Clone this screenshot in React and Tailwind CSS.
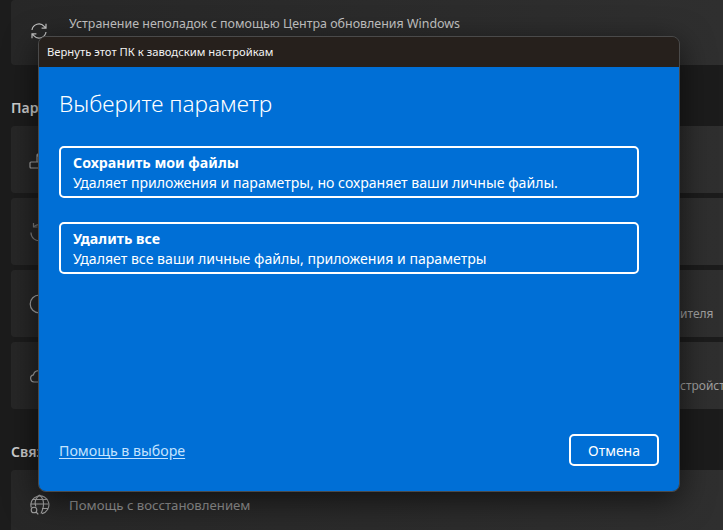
const font = "font-['Noto_Sans','Open_Sans',sans-serif]";

function Card({ className = "", icon, children }) {
  return (
    <div className={`ml-[11px] flex shrink-0 rounded-l-[4px] bg-gradient-to-r from-[#272727] to-[#2f2f2f] ${className}`}>
      <div className="flex w-[58px] shrink-0 items-center justify-center pr-[3px] text-[#a6a6a6]">{icon}</div>
      <div className="min-w-0 flex-1 overflow-hidden whitespace-nowrap">{children}</div>
    </div>
  );
}

const RefreshIcon = (
  <svg width="18" height="18" viewBox="0 0 18 18" fill="none" stroke="#c4c4c4" strokeWidth="1.2">
    <path d="M2 8a7 7 0 0 1 12.2-3.6L16 6.2M16 1.800v4.400h-4.400" />
    <path d="M16 10a7 7 0 0 1-12.200 3.600L2 11.800M2 16.200v-4.400h4.400" />
  </svg>
);

const ResetIcon = (
  <svg width="20" height="20" viewBox="0 0 20 20" fill="none" stroke="currentColor" strokeWidth="1.2">
    <path d="M1 17v-4a1 1 0 0 1 1-1h16a1 1 0 0 1 1 1v4a1 1 0 0 1-1 1H2a1 1 0 0 1-1-1Z" />
    <path d="M8 12V5h9M11 2 8 5l3 3" />
  </svg>
);

const HistoryIcon = (
  <svg width="20" height="20" viewBox="0 0 20 20" fill="none" stroke="#7e7e7e" strokeWidth="1.2">
    <path d="M5 4.500a8 8 0 1 1-3 6" />
    <path d="M4.500 1v4h4" />
  </svg>
);

const ClockIcon = (
  <svg width="20" height="20" viewBox="0 0 20 20" fill="none" stroke="currentColor" strokeWidth="1.2">
    <circle cx="10" cy="10" r="8.800" />
    <path d="M10 4.500v6h3.500" />
  </svg>
);

const CloudIcon = (
  <svg width="20" height="18" viewBox="0 0 20 18" fill="none" stroke="currentColor" strokeWidth="1.2">
    <path d="M5 15a3.600 3.600 0 0 1-.6-7.100A5.500 5.500 0 0 1 15 7.400 3.900 3.900 0 0 1 15 15Z" />
  </svg>
);

const GlobeIcon = (
  <svg width="21" height="21" viewBox="0 0 21 21" fill="none" stroke="currentColor" strokeWidth="1.1">
    <path d="M2.300 13.500A9 9 0 1 1 13 19.600" />
    <path d="M1.600 10h17.800M3 5.500h15M10.500 1c-5 4-5 8-3.600 11.500M10.500 1c4.800 4 5 11 1.500 18.500M13 14.500h6" />
    <circle cx="5" cy="16" r="2.800" />
    <path d="M7 18l2.300 2.300" />
  </svg>
);

function OptionButton({ title, description }) {
  return (
    <button className="flex h-[52px] w-full flex-col items-start justify-center rounded-[5px] border-2 border-white pl-[12px] text-left leading-[19px] text-white">
      <span className="text-[14.2px] font-bold">{title}</span>
      <span className="mt-[1px] text-[14.1px]">{description}</span>
    </button>
  );
}

export default function App() {
  return (
    <div className={`relative h-[530px] w-[723px] overflow-hidden bg-[#1c1c1c] ${font}`}>
      {/* Settings page behind the dialog */}
      <div className="flex h-full flex-col">
        <Card className="h-[65px]" icon={<div className="pb-[3px]">{RefreshIcon}</div>}>
          <div className="pt-[14px] text-[12.45px] leading-[20px] text-[#c6c6c6]">
            Устранение неполадок с помощью Центра обновления Windows
          </div>
        </Card>

        <div className="mt-[33px] h-[28px] shrink-0 pl-[11px] text-[14px] font-semibold leading-[20px] text-[#cfcfcf]">Параметры</div>

        <div className="flex shrink-0 flex-col gap-[5px]">
          <Card className="h-[67px]" icon={ResetIcon} />
          <Card className="h-[67px]" icon={HistoryIcon} />
          <Card className="h-[67px]" icon={ClockIcon}>
            <div className="pl-[611px] pt-[34px] text-[12px] leading-[20px] text-[#a0a0a0]">ителя</div>
          </Card>
          <Card className="h-[67px]" icon={CloudIcon}>
            <div className="pl-[611px] pt-[34px] text-[12px] leading-[20px] text-[#a0a0a0]">стройств</div>
          </Card>
        </div>

        <div className="mt-[33px] h-[28px] shrink-0 pl-[11px] text-[14px] font-semibold leading-[20px] text-[#cfcfcf]">Связанные</div>

        <Card className="h-[70px]" icon={<div className="pb-[1px] pl-[1px]">{GlobeIcon}</div>}>
          <div className="pt-[25px] text-[13.2px] leading-[20px] text-[#9a9a9a]">Помощь с восстановлением</div>
        </Card>
      </div>

      {/* Dialog over the page */}
      <div className="absolute left-[38px] top-[36px] flex h-[456px] w-[642px] flex-col overflow-hidden rounded-[8px] border border-[#4a4a4a] shadow-[0_8px_32px_rgba(0,0,0,0.6)]">
        <div className="flex h-[30px] shrink-0 items-center bg-[#26201c] pl-[8px] text-[11.25px] text-[#f2f2f2]">
          Вернуть этот ПК к заводским настройкам
        </div>

        <div className="flex flex-1 flex-col bg-[#006fd6] pb-[25px] pl-[20px] pr-[20px] pt-[21px] text-white">
          <h1 className="text-[22.6px] font-light leading-[32px]">Выберите параметр</h1>

          <div className="mt-[26px] flex w-[580px] flex-col gap-[24px]">
            <OptionButton title="Сохранить мои файлы" description="Удаляет приложения и параметры, но сохраняет ваши личные файлы." />
            <OptionButton title="Удалить все" description="Удаляет все ваши личные файлы, приложения и параметры" />
          </div>

          <div className="mt-auto flex items-center justify-between">
            <a className="mt-[1px] text-[14.2px] leading-[20px] text-[#c4e3ff] underline underline-offset-2">Помощь в выборе</a>
            <button className="h-[32px] w-[90px] rounded-[5px] border-2 border-white text-[14px]">Отмена</button>
          </div>
        </div>
      </div>
    </div>
  );
}
